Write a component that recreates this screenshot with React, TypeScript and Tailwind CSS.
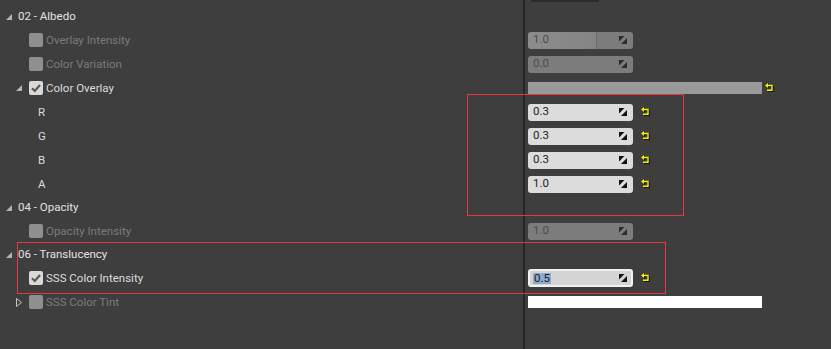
import React from "react";

const FONT = { fontFamily: "Roboto, 'Noto Sans', 'Liberation Sans', sans-serif" };

function Row({ h, left, right }: { h: string; left?: React.ReactNode; right?: React.ReactNode }) {
  return (
    <div className={`flex ${h}`}>
      <div className="w-[523px] flex items-center">{left}</div>
      <div className="w-[2px] bg-[#252525]" />
      <div className="flex-1 flex items-center pl-[3px]">{right}</div>
    </div>
  );
}

function DownTri() {
  return (
    <svg width="6" height="6" viewBox="0 0 6 6" className="block">
      <polygon points="6,0 6,6 0,6" fill="#b4b4b4" />
    </svg>
  );
}

function RightTri() {
  return (
    <svg width="6" height="9" viewBox="0 0 6 9" className="block">
      <polygon points="0.5,0.5 5.5,4.5 0.5,8.5" fill="none" stroke="#c4c4c4" strokeWidth="1" />
    </svg>
  );
}

function Check({ on }: { on: boolean }) {
  return (
    <div className={`w-[14px] h-[14px] rounded-[2px] ${on ? "bg-[#d9d9d9]" : "bg-[#8f8f8f]"}`}>
      {on && (
        <svg width="14" height="14" viewBox="0 0 14 14" className="block">
          <path d="M3 7.2 L5.8 10 L11 4" fill="none" stroke="#595959" strokeWidth="2.2" />
        </svg>
      )}
    </div>
  );
}

function Spin({ color }: { color: string }) {
  return (
    <svg width="8" height="8" viewBox="0 0 8 8" className="block">
      <polygon points="0,0 5.5,0 0,5.5" fill={color} />
      <polygon points="8,2 8,8 2,8" fill={color} />
    </svg>
  );
}

function Reset() {
  return (
    <svg width="10" height="10" viewBox="0 0 10 10" className="block ml-[8px]">
      <g transform="translate(1,1)">
        <polygon points="0,2.5 3,0 3,5" fill="#111" />
        <path d="M2.5 2.5 H7 V7.2 H2" fill="none" stroke="#111" strokeWidth="1.4" />
      </g>
      <polygon points="0,2.5 3,0 3,5" fill="#f4f400" />
      <path d="M2.5 2.5 H7 V7.2 H2" fill="none" stroke="#f4f400" strokeWidth="1.4" />
    </svg>
  );
}

function NumBox({ value, state }: { value: string; state: "on" | "off" | "slider" | "active" }) {
  if (state === "active") {
    return (
      <div className="w-[105px] h-[18px] rounded-[3px] border-2 border-[#f2f2f2] bg-[#d4d4d4] flex items-center justify-between pl-[3px] pr-[4px]">
        <span className="text-[11.5px] text-[#1c1c1c] bg-[#8fabcc] leading-[11px] px-[1px]">{value}</span>
        <Spin color="#111" />
      </div>
    );
  }
  const cls =
    state === "on"
      ? "bg-[#dcdcdc] text-[#222222]"
      : state === "slider"
      ? "bg-[linear-gradient(to_right,#8c8c8c_0px,#858585_68px,#6c6c6c_68px,#6c6c6c_69px,#7c7c7c_69px)] text-[#4c4c4c]"
      : "bg-[#7c7c7c] text-[#4c4c4c]";
  return (
    <div className={`w-[105px] h-[17px] rounded-[3px] flex items-center justify-between pl-[5px] pr-[6px] ${cls}`}>
      <span className="text-[11.5px] leading-none">{value}</span>
      <Spin color={state === "on" ? "#111" : "#2c2c2c"} />
    </div>
  );
}

function Category({ label }: { label: string }) {
  return (
    <div className="flex items-center pl-[6px]">
      <DownTri />
      <span className="ml-[6px] pt-[1px] text-[11.5px] text-[#e2e2e2]">{label}</span>
    </div>
  );
}

function Prop({ label, on, tri }: { label: string; on: boolean; tri?: "down" | "right" }) {
  return (
    <div className={`flex items-center ${tri ? "pl-[16px]" : "pl-[29px]"}`}>
      {tri === "down" && (
        <div className="mr-[7px]">
          <DownTri />
        </div>
      )}
      {tri === "right" && (
        <div className="mr-[7px]">
          <RightTri />
        </div>
      )}
      <Check on={on} />
      <span className={`ml-[3px] pt-[1px] text-[11.5px] ${on ? "text-[#dcdcdc]" : "text-[#7b7b7b]"}`}>{label}</span>
    </div>
  );
}

function Channel({ label }: { label: string }) {
  return <span className="pl-[38px] pt-[1px] text-[11.5px] text-[#dcdcdc]">{label}</span>;
}

export default function App() {
  return (
    <div className="relative w-[831px] h-[349px] bg-[#3e3e3e] overflow-hidden flex flex-col" style={FONT}>
      <div className="flex h-[5px]">
        <div className="w-[523px]" />
        <div className="w-[2px] bg-[#252525]" />
        <div className="flex-1 pl-[6px]">
          <div className="w-[68px] h-[2px] bg-[#2b2b2b]" />
        </div>
      </div>
      <Row h="h-[23px]" left={<Category label="02 - Albedo" />} />
      <Row h="h-[24px]" left={<Prop label="Overlay Intensity" on={false} />} right={<NumBox value="1.0" state="slider" />} />
      <Row h="h-[24px]" left={<Prop label="Color Variation" on={false} />} right={<NumBox value="0.0" state="off" />} />
      <Row
        h="h-[24px]"
        left={<Prop label="Color Overlay" on={true} tri="down" />}
        right={
          <div className="flex items-center">
            <div className="w-[234px] h-[12px] bg-[#999999]" />
            <div className="-ml-[5px]">
              <Reset />
            </div>
          </div>
        }
      />
      {["R", "G", "B", "A"].map((c) => (
        <Row
          key={c}
          h="h-[24px]"
          left={<Channel label={c} />}
          right={
            <div className="flex items-center">
              <NumBox value={c === "A" ? "1.0" : "0.3"} state="on" />
              <Reset />
            </div>
          }
        />
      ))}
      <Row h="h-[23px]" left={<Category label="04 - Opacity" />} />
      <Row h="h-[24px]" left={<Prop label="Opacity Intensity" on={false} />} right={<NumBox value="1.0" state="off" />} />
      <Row h="h-[23px]" left={<Category label="06 - Translucency" />} />
      <Row
        h="h-[24px]"
        left={<Prop label="SSS Color Intensity" on={true} />}
        right={
          <div className="flex items-center">
            <NumBox value="0.5" state="active" />
            <Reset />
          </div>
        }
      />
      <Row
        h="h-[24px]"
        left={<Prop label="SSS Color Tint" on={false} tri="right" />}
        right={<div className="w-[234px] h-[12px] bg-white" />}
      />
      <div className="flex flex-1">
        <div className="w-[523px]" />
        <div className="w-[2px] bg-[#252525]" />
        <div className="flex-1" />
      </div>

      <div className="absolute left-[467px] top-[94px] w-[217px] h-[122px] border border-[#e8383d]" />
      <div className="absolute left-[17px] top-[242px] w-[649px] h-[52px] border border-[#e8383d]" />
    </div>
  );
}
